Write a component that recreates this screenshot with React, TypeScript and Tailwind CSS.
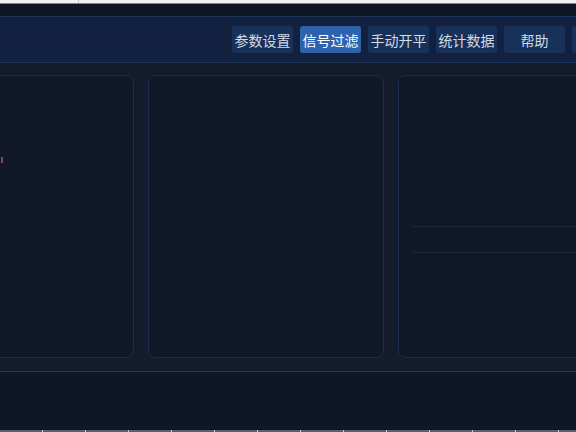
import React from "react";

// Trading console shell: top menu bar, three panels, status strip.

const MENU = ["参数设置", "信号过滤", "手动开平", "统计数据", "帮助"];
const ACTIVE = "信号过滤";

function MenuButton({ label }: { label: string }) {
  const active = label === ACTIVE;
  return (
    <button
      className={`flex h-[27px] w-[61px] shrink-0 items-center justify-center rounded-[3px] text-[14px] leading-none ${
        active ? "bg-[#2d62ad] text-white" : "bg-[#173159] text-[#d3dae6]"
      }`}
    >
      {label}
    </button>
  );
}

function Panel({ className, children }: { className: string; children?: React.ReactNode }) {
  return <div className={`rounded-[7px] border border-[#1a2d4c] bg-[#111828] ${className}`}>{children}</div>;
}

export default function App() {
  const ticks = Array.from({ length: 14 }, (_, i) => i);
  return (
    <div
      className="flex h-[432px] w-[576px] flex-col overflow-hidden bg-[#0f1727]"
      style={{ fontFamily: '"Noto Sans CJK SC", "Noto Sans", sans-serif' }}
    >
      {/* window chrome */}
      <div className="flex h-[3px] bg-[#f2f2f2]">
        <div className="w-[78px]" />
        <div className="w-px bg-[#c8c8c8]" />
      </div>
      <div className="h-[1px] bg-[#7c828c]" />
      <div className="h-[12px] bg-[#0e1626]" />

      {/* top menu; the last button runs past the window edge */}
      <div className="flex h-[47px] items-center justify-end gap-[7px] border-y border-[#1c3357] bg-[#132141] pl-4 -mr-[57px]">
        {MENU.map((m) => (
          <MenuButton key={m} label={m} />
        ))}
        <div className="h-[27px] w-[61px] shrink-0 rounded-[3px] bg-[#173159]" />
      </div>

      {/* panels */}
      <div className="flex h-[309px] border-b border-[#1c3c60] bg-[#131b2d] pb-[13px] pt-[12px] -ml-[20px] -mr-[40px]">
        <Panel className="relative mr-[14px] w-[154px]">
          <div className="absolute left-[20px] top-[81px] h-[6px] w-[2px] bg-[#7a4a5c]" />
        </Panel>
        <Panel className="mr-[14px] w-[236px]" />
        <Panel className="flex-1 pl-[13px] pt-[150px]">
          <div className="h-px bg-[#1e2639]" />
          <div className="mt-[25px] h-px bg-[#1e2639]" />
        </Panel>
      </div>

      <div className="flex-1" />

      {/* bottom ruler */}
      <div className="flex h-[2px] bg-[#5b616b]">
        {ticks.map((t) => (
          <div key={t} className="flex w-[43px] shrink-0 justify-end">
            <div className="w-px bg-[#c9ccd2]" />
          </div>
        ))}
      </div>
    </div>
  );
}
